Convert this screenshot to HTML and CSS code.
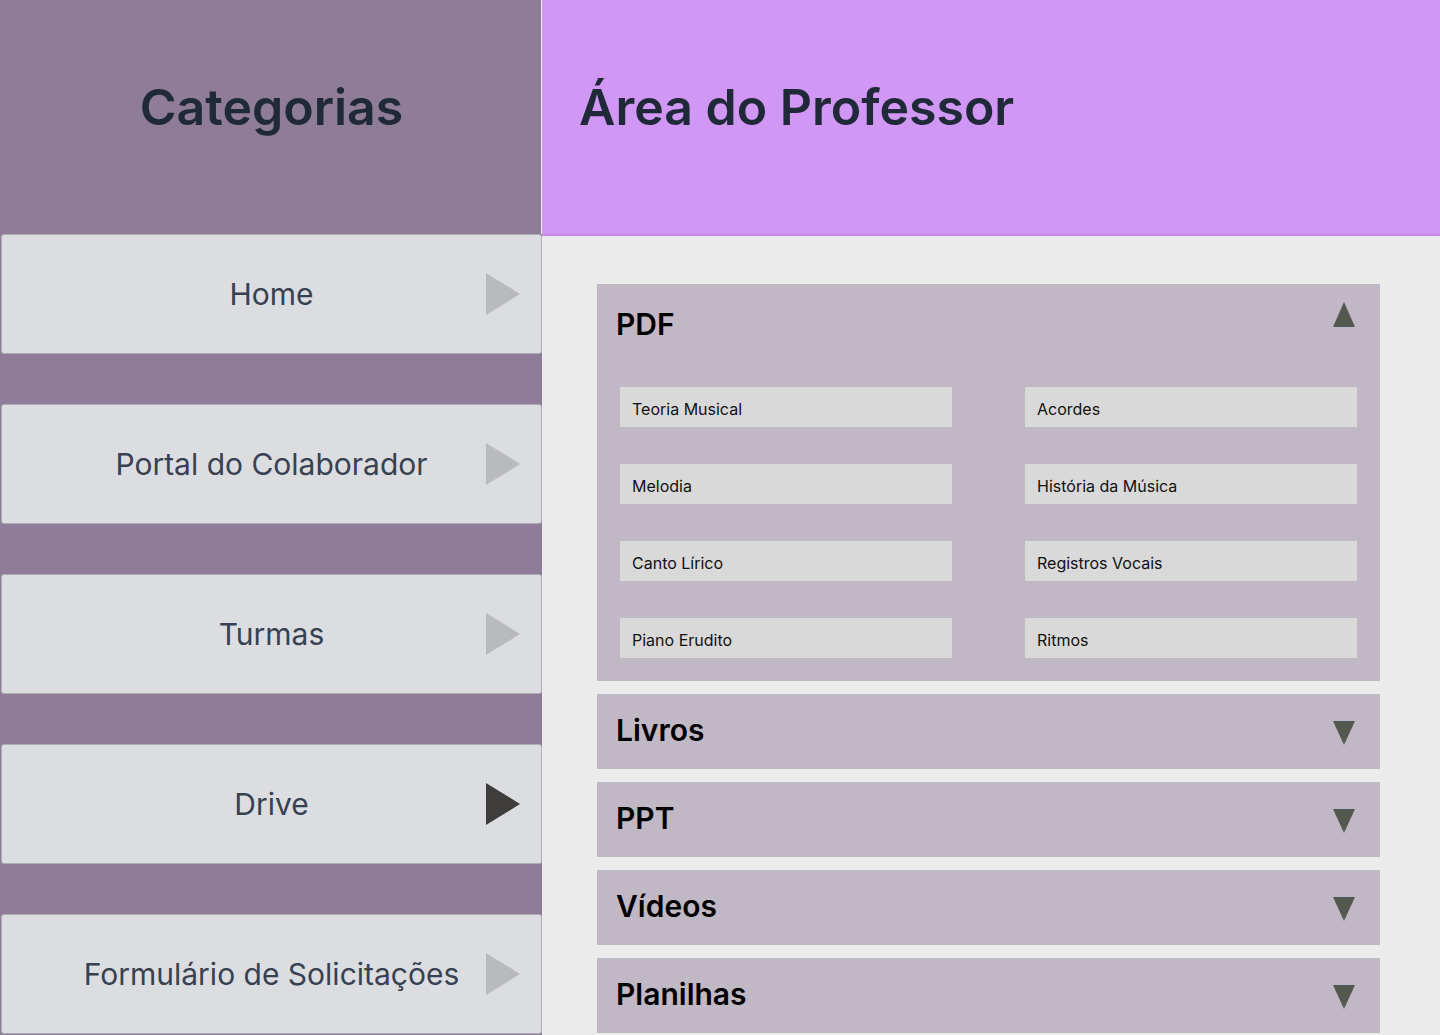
FILE: index.html
```html
<!DOCTYPE html>
<html lang="pt-BR">
<head>
<meta charset="utf-8">
<title>Área do Professor</title>
<link rel="stylesheet" href="styles.css">
</head>
<body>
<div class="page">
  <aside class="sidebar">
    <header class="sidebar-head">
      <h1 class="sidebar-title">Categorias</h1>
    </header>
    <nav class="nav">
      <a class="nav-item" href="#"><span class="nav-label">Home</span><span class="nav-arrow"></span></a>
      <div class="nav-gap"></div>
      <a class="nav-item" href="#"><span class="nav-label">Portal do Colaborador</span><span class="nav-arrow"></span></a>
      <div class="nav-gap"></div>
      <a class="nav-item" href="#"><span class="nav-label">Turmas</span><span class="nav-arrow"></span></a>
      <div class="nav-gap"></div>
      <a class="nav-item" href="#"><span class="nav-label">Drive</span><span class="nav-arrow nav-arrow--active"></span></a>
      <div class="nav-gap"></div>
      <a class="nav-item" href="#"><span class="nav-label">Formulário de Solicitações</span><span class="nav-arrow"></span></a>
    </nav>
  </aside>
  <main class="main">
    <header class="main-head">
      <h1 class="main-title">Área do Professor</h1>
    </header>
    <section class="content">
      <div class="acc-item acc-item--open">
        <div class="acc-head acc-head--open">
          <h2 class="acc-title">PDF</h2>
          <span class="caret caret--up"></span>
        </div>
        <div class="acc-body">
          <div class="file">Teoria Musical</div>
          <div class="file">Acordes</div>
          <div class="file">Melodia</div>
          <div class="file">História da Música</div>
          <div class="file">Canto Lírico</div>
          <div class="file">Registros Vocais</div>
          <div class="file">Piano Erudito</div>
          <div class="file">Ritmos</div>
        </div>
      </div>
      <div class="acc-item">
        <div class="acc-head">
          <h2 class="acc-title">Livros</h2>
          <span class="caret caret--down"></span>
        </div>
      </div>
      <div class="acc-item">
        <div class="acc-head">
          <h2 class="acc-title">PPT</h2>
          <span class="caret caret--down"></span>
        </div>
      </div>
      <div class="acc-item">
        <div class="acc-head">
          <h2 class="acc-title">Vídeos</h2>
          <span class="caret caret--down"></span>
        </div>
      </div>
      <div class="acc-item">
        <div class="acc-head">
          <h2 class="acc-title">Planilhas</h2>
          <span class="caret caret--down"></span>
        </div>
      </div>
    </section>
  </main>
</div>
</body>
</html>
```

FILE: styles.css
```css
* { box-sizing: border-box; }

html, body {
  margin: 0;
  padding: 0;
  height: 100%;
  overflow: hidden;
}

body {
  font-family: Inter, "Noto Sans", "Liberation Sans", sans-serif;
  background: #ebebeb;
}

.page {
  display: grid;
  grid-template-columns: 542px 1fr;
  height: 1035px;
}

/* ---------- Sidebar ---------- */
.sidebar {
  background: #8f7c99;
  display: flex;
  flex-direction: column;
}

.sidebar-head {
  height: 234px;
  border-right: 1px solid #f4eef6;
  padding-top: 77px;
}

.sidebar-title {
  margin: 0;
  text-align: center;
  font-size: 50px;
  line-height: 60px;
  font-weight: 600;
  color: #1f2937;
  padding-left: 2px;
}

.nav {
  display: flex;
  flex-direction: column;
}

.nav-item {
  display: grid;
  grid-template-columns: 1fr auto 1fr;
  align-items: center;
  height: 120px;
  margin-left: 1px;
  background: #dcdde0;
  border: 1px solid #adafb4;
  border-radius: 3px;
  text-decoration: none;
}

.nav-label {
  grid-column: 2;
  font-size: 30px;
  font-weight: 400;
  color: #374151;
  white-space: nowrap;
}

.nav-arrow {
  grid-column: 3;
  justify-self: end;
  margin-right: 21px;
  width: 0;
  height: 0;
  border-top: 21px solid transparent;
  border-bottom: 21px solid transparent;
  border-left: 34px solid #b9babd;
}

.nav-arrow--active {
  border-left-color: #3f3d3b;
}

.nav-gap {
  height: 50px;
}

/* ---------- Main ---------- */
.main {
  display: flex;
  flex-direction: column;
  min-width: 0;
}

.main-head {
  height: 236px;
  background: #d197f5;
  border-bottom: 2px solid #c68be8;
  padding: 77px 0 0 37px;
}

.main-title {
  margin: 0;
  font-size: 50px;
  line-height: 60px;
  font-weight: 600;
  color: #1f2937;
}

.content {
  padding: 48px 60px 0 55px;
  display: flex;
  flex-direction: column;
  gap: 13px;
}

.acc-item {
  background: #c0b8c4;
}

.acc-head {
  height: 75px;
  display: flex;
  align-items: center;
  justify-content: space-between;
  padding: 0 25px 0 19px;
}

.acc-head--open {
  height: auto;
  align-items: flex-start;
  padding-top: 18px;
}

.acc-title {
  margin: 0;
  font-size: 30px;
  line-height: 36px;
  font-weight: 600;
  color: #000;
  padding-bottom: 4px;
}

.acc-head--open .acc-title {
  padding-top: 4px;
  padding-bottom: 0;
}

.caret {
  width: 0;
  height: 0;
  border-left: 11px solid transparent;
  border-right: 11px solid transparent;
}

.caret--up {
  border-bottom: 25px solid #535850;
}

.caret--down {
  border-top: 24px solid #535850;
  margin-top: 2px;
}

.acc-body {
  display: grid;
  grid-template-columns: 1fr 1fr;
  column-gap: 73px;
  row-gap: 37px;
  padding: 45px 23px 23px;
}

.file {
  height: 40px;
  background: #d9d9d9;
  display: flex;
  align-items: center;
  padding: 4px 12px 0;
  font-size: 16px;
  color: #111;
}
```
